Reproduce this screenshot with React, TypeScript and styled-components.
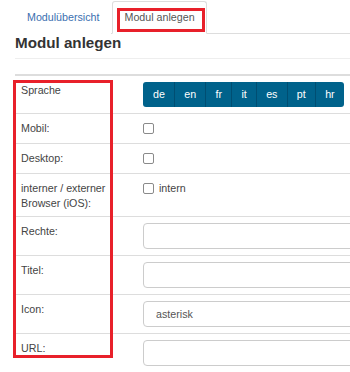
import * as React from "react";
import styled, { createGlobalStyle } from "styled-components";

const GlobalStyle = createGlobalStyle`
  html, body {
    margin: 0;
    padding: 0;
    background: #fff;
    overflow: hidden;
  }
  body {
    font-family: "Liberation Sans", Arial, sans-serif;
    font-size: 10.7px;
    color: #333;
  }
`;

const languages = ["de", "en", "fr", "it", "es", "pt", "hr"];

type Field =
  | { label: string; kind: "languages" }
  | { label: string; kind: "check"; text?: string }
  | { label: string; kind: "input"; value?: string };

const fields: Field[] = [
  { label: "Sprache", kind: "languages" },
  { label: "Mobil:", kind: "check" },
  { label: "Desktop:", kind: "check" },
  { label: "interner / externer Browser (iOS):", kind: "check", text: "intern" },
  { label: "Rechte:", kind: "input" },
  { label: "Titel:", kind: "input" },
  { label: "Icon:", kind: "input", value: "asterisk" },
  { label: "URL:", kind: "input" },
];

export default function App() {
  return (
    <Page>
      <GlobalStyle />
      <Tabs>
        <Tab>Modulübersicht</Tab>
        <Tab $active>Modul anlegen</Tab>
      </Tabs>
      <Heading>Modul anlegen</Heading>
      <Rule />
      <Form>
        {fields.map((f, i) => (
          <Row key={f.label} $first={i === 0}>
            <Label>{f.label}</Label>
            <Value>
              {f.kind === "languages" && (
                <LangGroup>
                  {languages.map((l) => (
                    <LangButton key={l}>{l}</LangButton>
                  ))}
                </LangGroup>
              )}
              {f.kind === "check" && (
                <CheckLine>
                  <Check type="checkbox" />
                  {f.text && <CheckText>{f.text}</CheckText>}
                </CheckLine>
              )}
              {f.kind === "input" && <TextInput defaultValue={f.value ?? ""} />}
            </Value>
          </Row>
        ))}
      </Form>
      <Highlight $left={117} $top={8} $width={88} $height={24} />
      <Highlight $left={13} $top={80} $width={100} $height={278} />
    </Page>
  );
}

const Page = styled.div`
  position: relative;
  padding: 0 0 0 15px;
  overflow: hidden;
`;

const Tabs = styled.div`
  display: flex;
  align-items: flex-end;
  height: 34px;
  border-bottom: 1px solid #ddd;
  box-sizing: border-box;
`;

const Tab = styled.div<{ $active?: boolean }>`
  height: 31px;
  line-height: 31px;
  padding: 0 11px;
  margin-right: 1px;
  margin-bottom: -1px;
  border: 1px solid ${({ $active }) => ($active ? "#ddd" : "transparent")};
  border-bottom-color: ${({ $active }) => ($active ? "#fff" : "transparent")};
  border-radius: 3px 3px 0 0;
  background: #fff;
  color: ${({ $active }) => ($active ? "#555" : "#3b6fb0")};
`;

const Heading = styled.h1`
  margin: 0;
  font-size: 15.2px;
  line-height: 18px;
  font-weight: bold;
  color: #333;
`;

const Rule = styled.div`
  margin-top: 6px;
  border-top: 1px solid #eee;
`;

const Form = styled.div`
  margin-top: 15px;
`;

const Row = styled.div<{ $first?: boolean }>`
  display: grid;
  grid-template-columns: 122px 1fr;
  border-top: ${({ $first }) => ($first ? "2px" : "1px")} solid #ddd;
  overflow: hidden;
`;

const Label = styled.div`
  padding: 7px 6px 5px;
  line-height: 15px;
  color: #444;
`;

const Value = styled.div`
  padding: 6px 0 6px 6px;
  display: flex;
  align-items: flex-start;
  min-width: 0;
  overflow: hidden;
`;

const LangGroup = styled.div`
  display: flex;
  border-radius: 3px;
  overflow: hidden;
  background: #00628b;
  height: 25px;
  flex-shrink: 0;
`;

const LangButton = styled.div`
  padding: 0 9.2px;
  line-height: 25px;
  color: #fff;
  border-left: 1px solid #004e72;
  &:first-child {
    border-left: none;
    padding-left: 10px;
  }
`;

const CheckLine = styled.label`
  display: flex;
  align-items: flex-start;
  line-height: 17px;
  height: 17px;
`;

const Check = styled.input`
  appearance: none;
  margin: 3px 0 0;
  width: 11px;
  height: 11px;
  border: 1px solid #8a8a8a;
  border-radius: 2px;
  background: #fff;
  box-sizing: border-box;
`;

const CheckText = styled.span`
  margin-left: 5px;
  color: #444;
`;

const TextInput = styled.input`
  box-sizing: border-box;
  flex: 0 0 320px;
  width: 320px;
  height: 26px;
  padding: 0 12px;
  border: 1px solid #ccc;
  border-radius: 4px;
  font-family: "Liberation Sans", Arial, sans-serif;
  font-size: 10.7px;
  color: #555;
  outline: none;
`;

const Highlight = styled.div<{ $left: number; $top: number; $width: number; $height: number }>`
  position: absolute;
  left: ${({ $left }) => $left}px;
  top: ${({ $top }) => $top}px;
  width: ${({ $width }) => $width}px;
  height: ${({ $height }) => $height}px;
  border: 3px solid #e8202a;
  box-sizing: border-box;
  pointer-events: none;
`;
